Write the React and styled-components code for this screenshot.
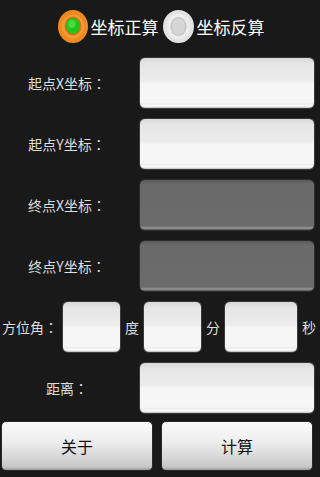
import React, { useState } from "react";
import styled, { createGlobalStyle } from "styled-components";

const GlobalStyle = createGlobalStyle`
    html, body {
        margin: 0;
        padding: 0;
        background: #191919;
    }
    * {
        box-sizing: border-box;
    }
`;

const FONT = `"Noto Sans CJK SC", "Noto Sans", "Liberation Sans", sans-serif`;
// TC centres the full-width colon, like the reference
const LABEL_FONT = `"Noto Sans CJK TC", "Noto Sans CJK SC", "Liberation Sans", sans-serif`;

function RadioDot({ checked }) {
    if (checked) {
        return (
            <svg width="30" height="33" viewBox="0 0 30 33">
                <ellipse cx="15" cy="16.5" rx="15" ry="16.5" fill="#ef8a1f" />
                <ellipse cx="15" cy="16.5" rx="11" ry="12" fill="#f39a3a" />
                <ellipse cx="15" cy="16" rx="8.5" ry="9.5" fill="#d96f10" />
                <ellipse cx="15" cy="16" rx="7" ry="8" fill="#22c41e" />
                <ellipse cx="14" cy="14" rx="3.5" ry="4" fill="#3fe03a" />
            </svg>
        );
    }
    return (
        <svg width="31" height="33" viewBox="0 0 31 33">
            <ellipse cx="15.5" cy="16.5" rx="15.5" ry="16.5" fill="#e2e2e2" />
            <ellipse cx="15.5" cy="16.5" rx="12" ry="13" fill="#ececec" />
            <ellipse cx="15.5" cy="16.5" rx="8" ry="9.5" fill="#c6c6c6" />
            <ellipse cx="15.5" cy="16.5" rx="6.5" ry="8" fill="#d6d6d6" />
        </svg>
    );
}

export default function App() {
    const [mode, setMode] = useState("forward");
    const reverse = mode === "reverse";

    return (
        <Screen>
            <GlobalStyle />
            <RadioGroup>
                <RadioOption onClick={() => setMode("forward")}>
                    <RadioDot checked={!reverse} />
                    <RadioText>坐标正算</RadioText>
                </RadioOption>
                <RadioOption onClick={() => setMode("reverse")}>
                    <RadioDot checked={reverse} />
                    <RadioText>坐标反算</RadioText>
                </RadioOption>
            </RadioGroup>

            <Form>
                <FieldRow>
                    <Label>起点X坐标：</Label>
                    <Field />
                </FieldRow>
                <FieldRow>
                    <Label>起点Y坐标：</Label>
                    <Field />
                </FieldRow>
                <FieldRow>
                    <Label>终点X坐标：</Label>
                    <Field disabled={!reverse} />
                </FieldRow>
                <FieldRow>
                    <Label>终点Y坐标：</Label>
                    <Field disabled={!reverse} />
                </FieldRow>
                <AngleRow>
                    <AngleLabel>方位角：</AngleLabel>
                    <Field $w={59} />
                    <Unit>度</Unit>
                    <Field $w={59} />
                    <Unit>分</Unit>
                    <Field $w={74} />
                    <Unit>秒</Unit>
                </AngleRow>
                <FieldRow>
                    <Label>距离：</Label>
                    <Field />
                </FieldRow>
            </Form>

            <ButtonBar>
                <Button>关于</Button>
                <Button>计算</Button>
            </ButtonBar>
        </Screen>
    );
}

const Screen = styled.div`
    width: 320px;
    height: 477px;
    background: #191919;
    font-family: ${FONT};
    overflow: hidden;
`;

const RadioGroup = styled.div`
    display: flex;
    justify-content: center;
    align-items: center;
    gap: 4px;
    height: 52px;
    padding-left: 2px;
`;

const RadioOption = styled.label`
    display: flex;
    align-items: center;
    gap: 3px;
    cursor: pointer;
`;

const RadioText = styled.span`
    color: #ffffff;
    font-size: 17px;
    line-height: 1;
`;

const Form = styled.div`
    display: flex;
    flex-direction: column;
    gap: 9px;
    padding-top: 5px;
`;

const FieldRow = styled.div`
    display: grid;
    grid-template-columns: 139px 176px;
    align-items: center;
    height: 52px;
`;

const Label = styled.span`
    color: #dedede;
    font-family: ${LABEL_FONT};
    font-size: 14px;
    text-align: center;
    padding-right: 5px;
    white-space: nowrap;
`;

const Field = styled.input.attrs({ type: "text" })`
    width: ${(p) => (p.$w ? `${p.$w}px` : "100%")};
    height: 52px;
    border: 1px solid #3a3a3a;
    border-radius: 6px;
    outline: none;
    padding: 0 8px;
    font-family: ${FONT};
    font-size: 16px;
    background: linear-gradient(
        #d8d8d8 0%,
        #e6e6e6 12%,
        #ececec 45%,
        #f6f6f6 52%,
        #f6f6f6 88%,
        #ececec 92%,
        #ffffff 96%,
        #b8b8b8 100%
    );

    &:disabled {
        border-color: #2c2c2c;
        background: linear-gradient(
            #5a5a5a 0%,
            #6a6a6a 8%,
            #6b6b6b 88%,
            #6a6a6a 92%,
            #9a9a9a 96%,
            #505050 100%
        );
    }
`;

const AngleRow = styled.div`
    display: flex;
    align-items: center;
    gap: 4px;
    height: 52px;
    padding-left: 2px;
`;

const AngleLabel = styled.span`
    color: #dedede;
    font-family: ${LABEL_FONT};
    font-size: 14px;
    width: 56px;
    white-space: nowrap;
`;

const Unit = styled.span`
    color: #dedede;
    font-size: 14px;
    width: 14px;
    text-align: center;
`;

const ButtonBar = styled.div`
    display: grid;
    grid-template-columns: 152px 152px;
    gap: 8px;
    padding: 7px 0 0 1px;
`;

const Button = styled.button`
    height: 50px;
    border: 1px solid #2a2a2a;
    border-radius: 5px;
    font-family: ${FONT};
    font-size: 16px;
    color: #111111;
    cursor: pointer;
    background: linear-gradient(
        #fbfbfb 0%,
        #eeeeee 40%,
        #d6d6d6 75%,
        #c6c6c6 94%,
        #9a9a9a 100%
    );
`;
